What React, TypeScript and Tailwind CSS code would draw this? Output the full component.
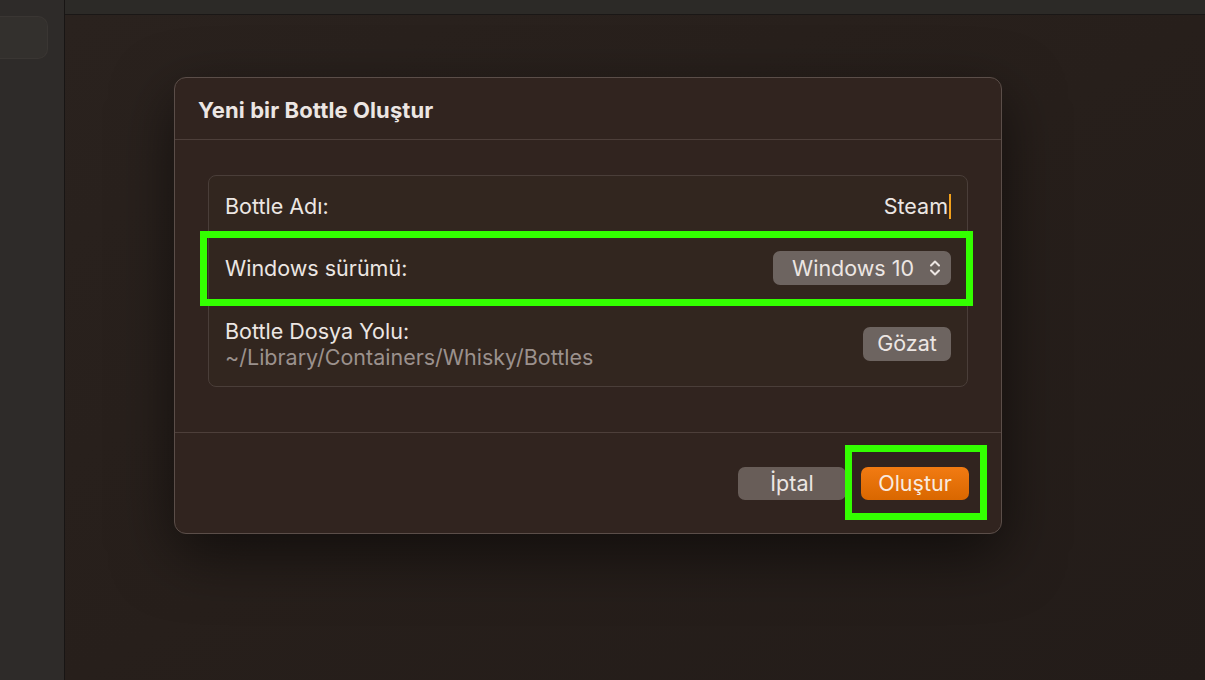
import * as React from "react";

const font = { fontFamily: "Inter, 'Noto Sans', sans-serif" };

const UpDown = () => (
  <svg width="12" height="18" viewBox="0 0 12 18" fill="none" stroke="currentColor" strokeWidth="2" strokeLinecap="round" strokeLinejoin="round">
    <path d="M2 6.5 L6 2.5 L10 6.5" />
    <path d="M2 11.5 L6 15.5 L10 11.5" />
  </svg>
);

export default function App() {
  return (
    <div className="w-[1205px] h-[680px] flex bg-[#29211d] overflow-hidden" style={font}>
      {/* sidebar */}
      <div className="w-[65px] h-full shrink-0 bg-[#2e2b29] border-r border-[#181514] pt-[16px]">
        <div className="w-[48px] h-[43px] rounded-r-[10px] bg-[#33302d] border border-l-0 border-[#3a3633]" />
      </div>

      <div className="flex-1 flex flex-col min-w-0">
        {/* toolbar strip */}
        <div className="h-[15px] shrink-0 bg-[#2c2a27] border-b border-[#1a1716]" />

        <div className="flex-1 pl-[109px] pt-[62px] bg-gradient-to-br from-[#2a221e] via-[#271f1b] to-[#231c19]">
          {/* dialog */}
          <div className="w-[828px] h-[457px] rounded-[12px] bg-[#31241f] border border-[#5b4e49] shadow-[0_20px_60px_rgba(0,0,0,0.55)] flex flex-col text-[#ece6e3]">
            <div className="h-[62px] shrink-0 flex items-center pl-[23px] pt-[4px] border-b border-[#4d3f3a]">
              <h1 className="text-[22px] font-bold tracking-[0.1px] text-[#ece6e3]">Yeni bir Bottle Oluştur</h1>
            </div>

            <div className="flex-1 px-[33px] pt-[35px]">
              <div className="w-[760px] h-[212px] rounded-[8px] border border-[#4a3e39] bg-[#32261f] flex flex-col text-[21.5px]">
                <div className="h-[61px] flex items-center justify-between pl-[16px] pr-[16px]">
                  <span>Bottle Adı:</span>
                  <span className="flex items-center">
                    Steam
                    <span className="inline-block w-[2px] h-[25px] bg-[#f3a11b] ml-[1px]" />
                  </span>
                </div>

                <div className="relative h-[62px] flex items-center justify-between pl-[16px] pr-[16px]">
                  <span>Windows sürümü:</span>
                  <div className="w-[178px] h-[34px] rounded-[7px] bg-[#6d6460] flex items-center justify-between pl-[19px] pr-[10px] text-[#ece6e3]">
                    <span>Windows 10</span>
                    <UpDown />
                  </div>
                  <div className="absolute -left-[9px] -right-[6px] -top-[6px] -bottom-[7px] border-[7px] border-[#33ff00]" />
                </div>

                <div className="flex-1 flex items-center justify-between pl-[16px] pr-[16px] pt-[2px]">
                  <div className="flex flex-col leading-[26px]">
                    <span>Bottle Dosya Yolu:</span>
                    <span className="text-[#9b918d]">~/Library/Containers/Whisky/Bottles</span>
                  </div>
                  <button className="w-[88px] h-[34px] rounded-[7px] bg-[#6d6460] text-[#ece6e3]">Gözat</button>
                </div>
              </div>
            </div>

            <div className="h-[101px] shrink-0 border-t border-[#4d3f3a] flex items-start justify-end pt-[34px] pr-[32px] gap-[15px] text-[21.5px]">
              <button className="w-[108px] h-[33px] rounded-[7px] bg-[#685d58] text-[#ece6e3]">İptal</button>
              <div className="relative">
                <button className="w-[108px] h-[33px] rounded-[7px] bg-gradient-to-b from-[#f27b12] to-[#d96700] text-[#f8ebe0]">Oluştur</button>
                <div className="absolute -left-[16px] -right-[18px] -top-[22px] -bottom-[20px] border-[7px] border-[#33ff00]" />
              </div>
            </div>
          </div>
        </div>
      </div>
    </div>
  );
}
